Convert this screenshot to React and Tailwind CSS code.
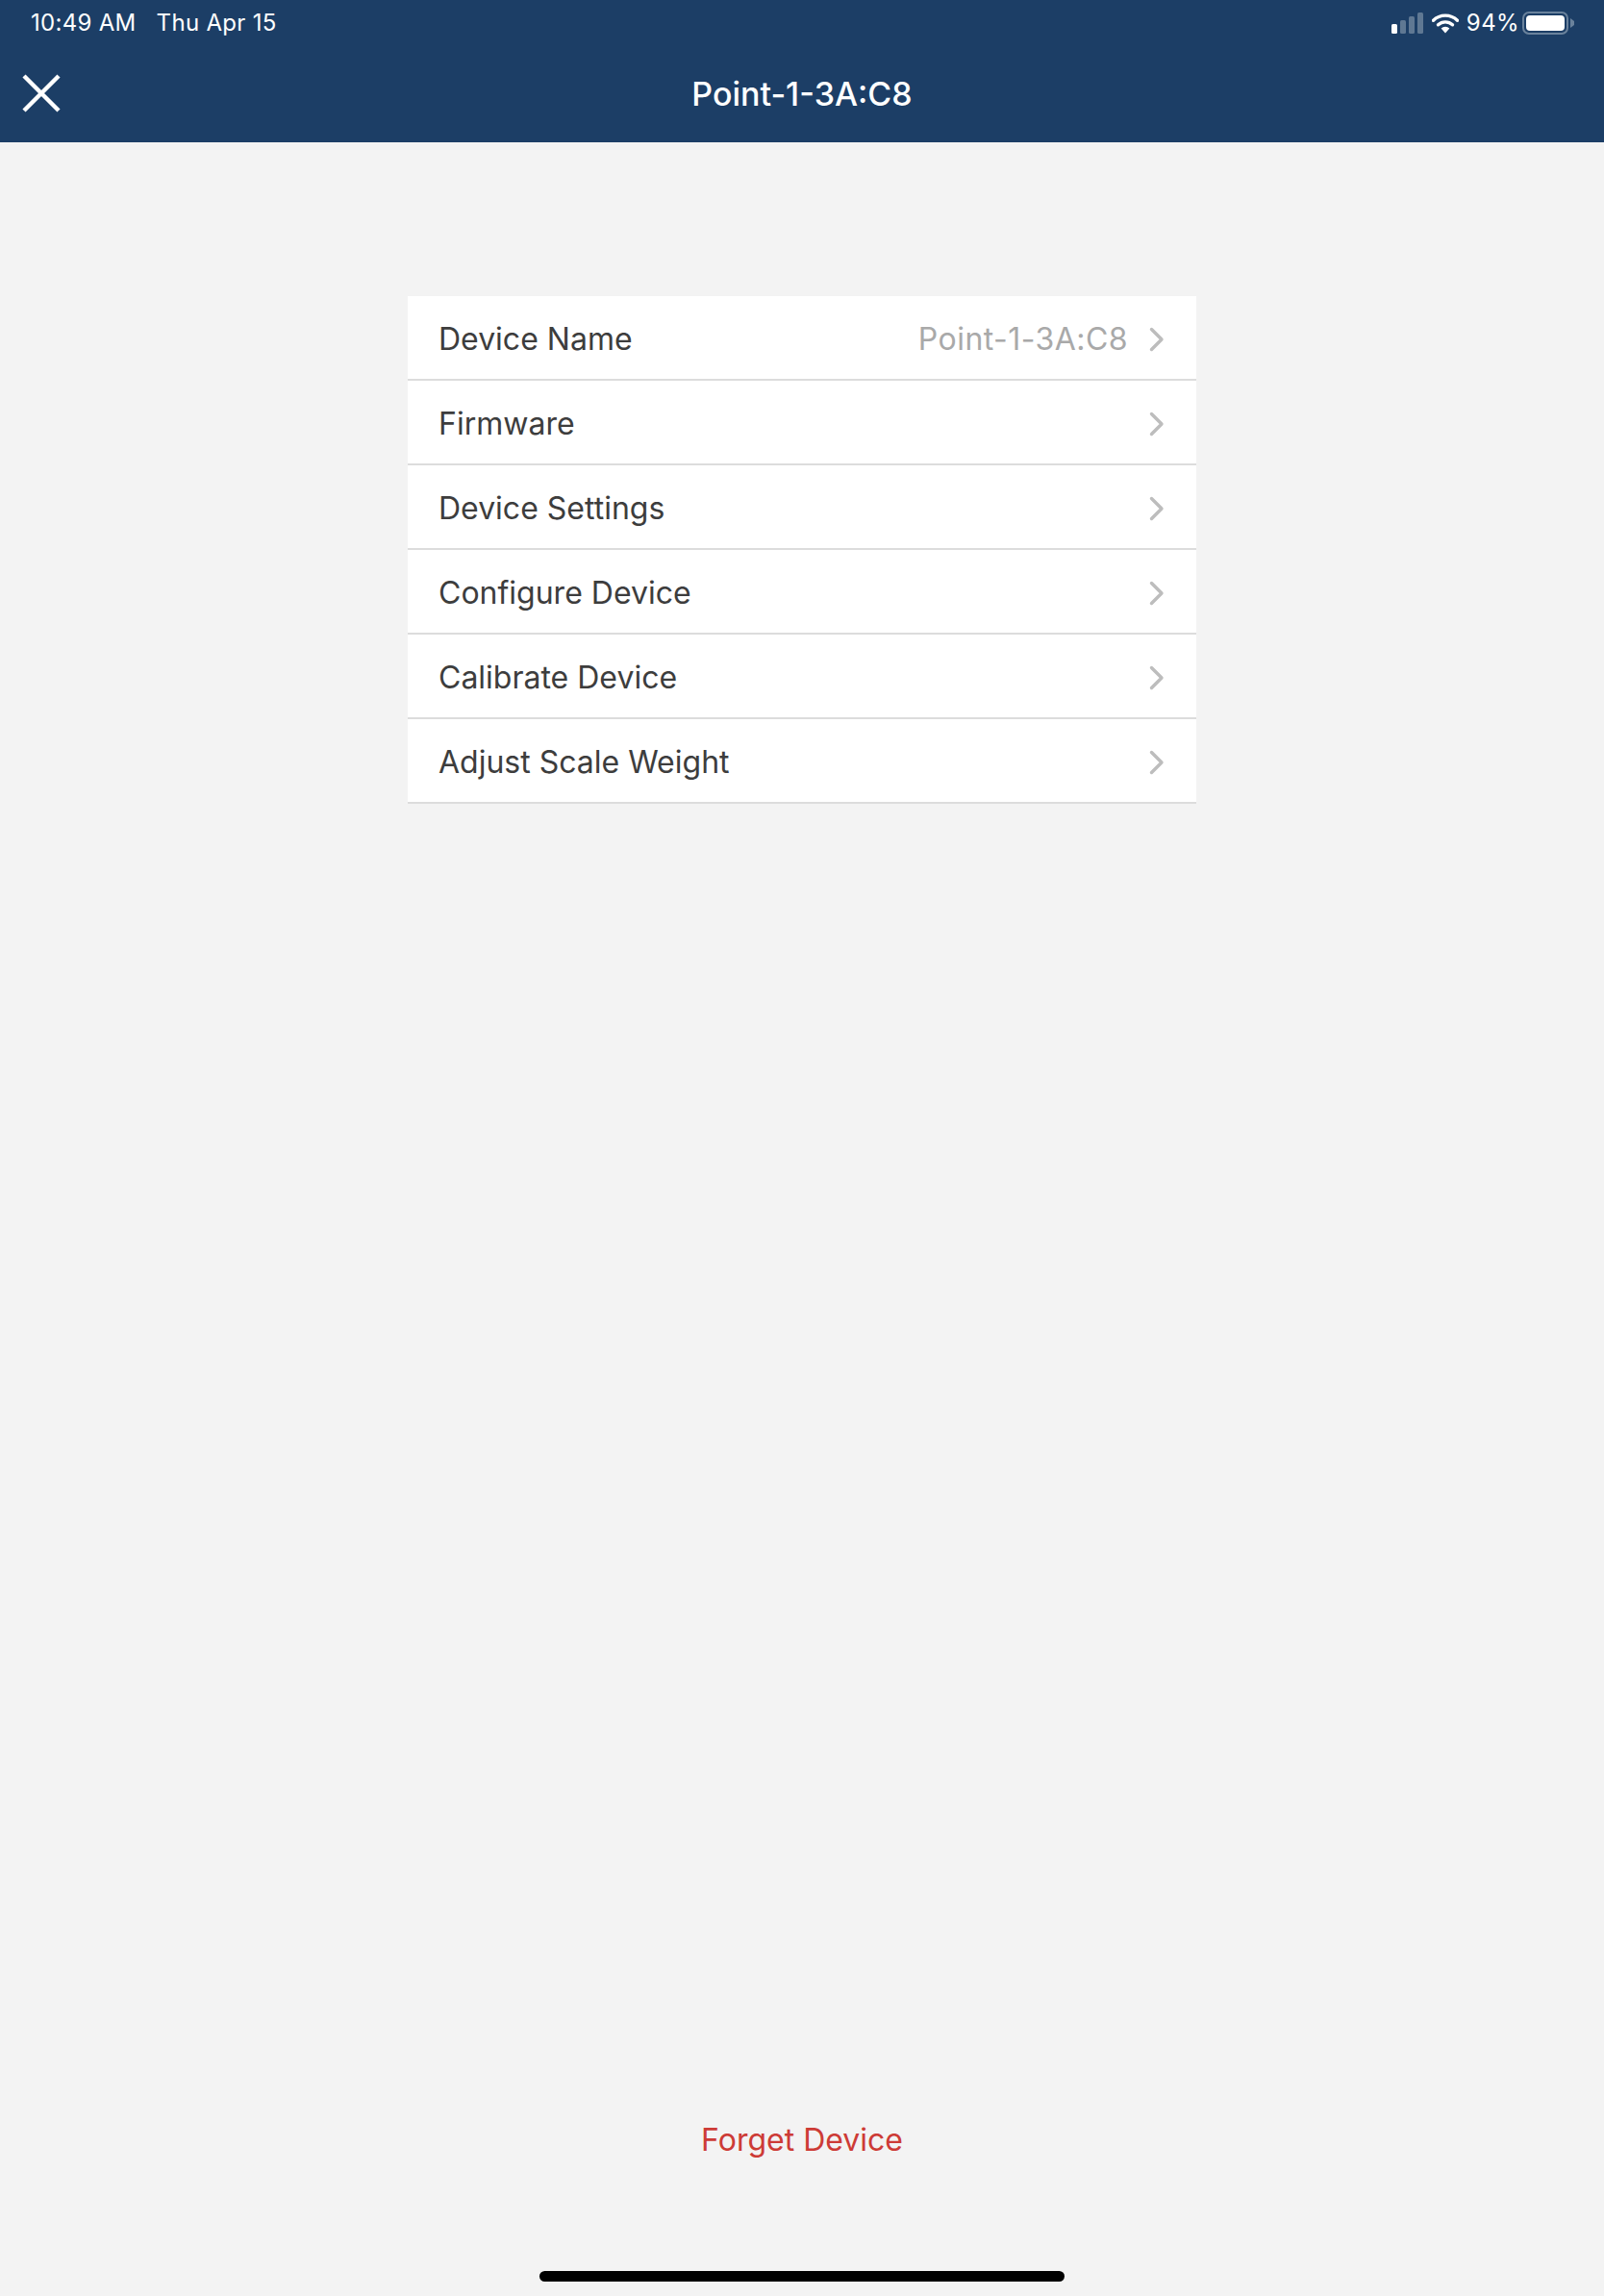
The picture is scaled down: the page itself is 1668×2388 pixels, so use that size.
const font = { fontFamily: '"Inter", "Liberation Sans", sans-serif' };

const rows = [
  { label: "Device Name", value: "Point-1-3A:C8" },
  { label: "Firmware" },
  { label: "Device Settings" },
  { label: "Configure Device" },
  { label: "Calibrate Device" },
  { label: "Adjust Scale Weight" },
];

function Chevron() {
  return (
    <svg width="16" height="26" viewBox="0 0 16 26" fill="none" className="shrink-0">
      <path d="M2.5 2.5 L13 13 L2.5 23.5" stroke="#bdbdbd" strokeWidth="3.4" strokeLinecap="round" strokeLinejoin="round" />
    </svg>
  );
}

function StatusIcons() {
  return (
    <div className="flex items-center">
      <svg width="34" height="22" viewBox="0 0 34 22" className="mr-[8px]">
        <rect x="0" y="12" width="6" height="10" rx="1.5" fill="#ffffff" />
        <rect x="9" y="8" width="6" height="14" rx="1.5" fill="#5f7893" />
        <rect x="18" y="4" width="6" height="18" rx="1.5" fill="#5f7893" />
        <rect x="27" y="0" width="6" height="22" rx="1.5" fill="#5f7893" />
      </svg>
      <svg width="28" height="21" viewBox="0 0 28 21" className="mr-[8px]">
        <path d="M1.5 7.2 A18 18 0 0 1 26.5 7.2" stroke="#fff" strokeWidth="3.4" fill="none" strokeLinecap="round" />
        <path d="M6.5 11.8 A11 11 0 0 1 21.5 11.8" stroke="#fff" strokeWidth="3.4" fill="none" strokeLinecap="round" />
        <path d="M9.6 15.6 A6.4 6.4 0 0 1 18.4 15.6 L14 20.6 Z" fill="#fff" />
      </svg>
      <span className="text-[24px] leading-none text-white tracking-[0.4px] mr-[3px]">94%</span>
      <div className="w-[48px] h-[24px] rounded-[7px] border-2 border-[#6a829c] p-[2px] mr-[2px]">
        <div className="h-full w-full rounded-[4px] bg-white" />
      </div>
      <svg width="4" height="10" viewBox="0 0 4 10">
        <path d="M0 0 L4 3 L4 7 L0 10 Z" fill="#6a829c" />
      </svg>
    </div>
  );
}

export default function App() {
  return (
    <div style={font} className="w-[1668px] h-[2388px] flex flex-col bg-[#f3f3f3]">
      <header className="h-[148px] shrink-0 bg-[#1c3e66] text-white flex flex-col">
        <div className="h-[48px] flex items-center justify-between pl-[32px] pr-[31px]">
          <div className="flex gap-[21px] text-[24px] leading-none tracking-[0.3px]">
            <span>10:49 AM</span>
            <span>Thu Apr 15</span>
          </div>
          <StatusIcons />
        </div>
        <div className="relative flex-1 flex items-center justify-center">
          <svg width="40" height="40" viewBox="0 0 40 40" className="absolute left-[23px] top-[29px]">
            <path d="M2 2 L38 38 M38 2 L2 38" stroke="#fff" strokeWidth="4.4" />
          </svg>
          <h1 className="text-[34px] leading-none font-medium">Point-1-3A:C8</h1>
        </div>
      </header>

      <main className="flex-1 flex flex-col items-center pt-[160px]">
        <div className="w-[820px] bg-white">
          {rows.map((r) => (
            <div key={r.label} className="h-[88px] flex items-center justify-between pl-[32px] pr-[33px] pt-[3px] border-b-2 border-[#dcdcdc]">
              <span className="text-[32px] leading-none text-[#3d3d3d]">{r.label}</span>
              <div className="flex items-center gap-[22px]">
                {r.value && <span className="text-[32px] leading-none tracking-[0.45px] text-[#a9a9a9]">{r.value}</span>}
                <Chevron />
              </div>
            </div>
          ))}
        </div>
        <div className="mt-auto flex flex-col items-center">
          <button className="text-[32px] leading-none text-[#cd3b36]">Forget Device</button>
          <div className="mt-[120px] mb-[15px] w-[546px] h-[11px] rounded-full bg-black" />
        </div>
      </main>
    </div>
  );
}
